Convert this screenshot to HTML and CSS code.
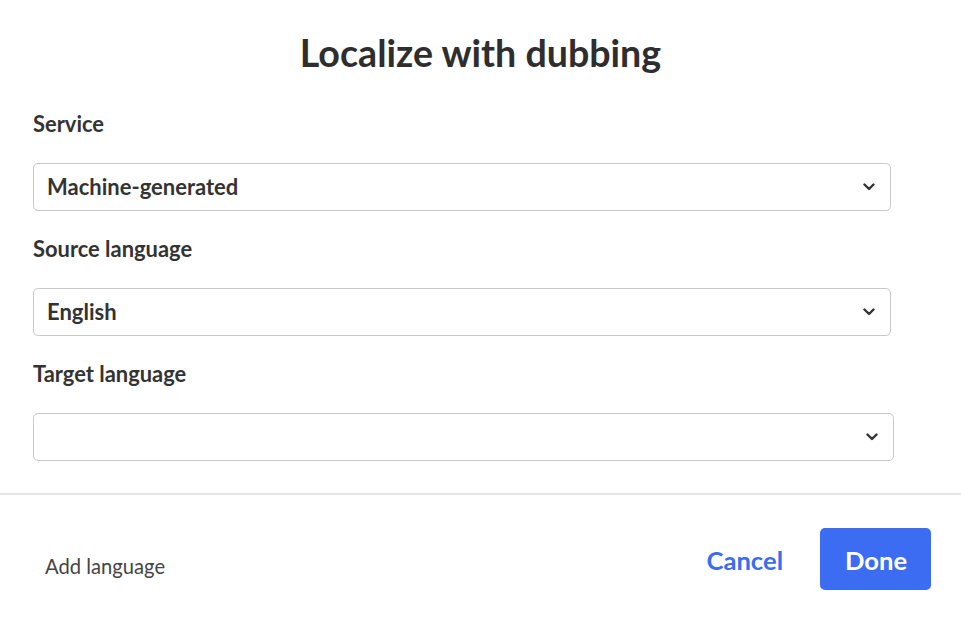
FILE: index.html
```html
<!DOCTYPE html>
<html lang="en">
<head>
<meta charset="utf-8">
<title>Localize with dubbing</title>
<link rel="stylesheet" href="styles.css">
</head>
<body>
<div class="dialog">
  <h1 class="title">Localize with dubbing</h1>
  <div class="form">
    <div class="field">
      <div class="label">Service</div>
      <div class="select">
        <span class="value">Machine-generated</span>
        <svg class="chev" width="12" height="8" viewBox="0 0 12 8"><path d="M1.5 1.5 L6 6 L10.5 1.5" fill="none" stroke="#333" stroke-width="2.4" stroke-linecap="round" stroke-linejoin="round"/></svg>
      </div>
    </div>
    <div class="field">
      <div class="label">Source language</div>
      <div class="select">
        <span class="value">English</span>
        <svg class="chev" width="12" height="8" viewBox="0 0 12 8"><path d="M1.5 1.5 L6 6 L10.5 1.5" fill="none" stroke="#333" stroke-width="2.4" stroke-linecap="round" stroke-linejoin="round"/></svg>
      </div>
    </div>
    <div class="field">
      <div class="label">Target language</div>
      <div class="select select-wide">
        <span class="value"></span>
        <svg class="chev" width="12" height="8" viewBox="0 0 12 8"><path d="M1.5 1.5 L6 6 L10.5 1.5" fill="none" stroke="#333" stroke-width="2.4" stroke-linecap="round" stroke-linejoin="round"/></svg>
      </div>
    </div>
  </div>
  <div class="footer">
    <span class="add">Add language</span>
    <div class="actions">
      <span class="cancel">Cancel</span>
      <span class="done">Done</span>
    </div>
  </div>
</div>
</body>
</html>
```
FILE: styles.css
```css
html, body {
  margin: 0;
  padding: 0;
  background: #ffffff;
}
body {
  font-family: Lato, "Open Sans", "Liberation Sans", sans-serif;
  color: #333333;
}
.dialog {
  display: flex;
  flex-direction: column;
}
.title {
  margin: 31px 0 0 0;
  font-size: 37.6px;
  line-height: 44px;
  font-weight: 700;
  text-align: center;
  color: #2e2e2e;
}
.form {
  display: flex;
  flex-direction: column;
  gap: 26px;
  padding: 37px 70px 32px 33px;
  border-bottom: 2px solid #e4e4e4;
}
.field {
  display: flex;
  flex-direction: column;
  gap: 27px;
}
.label {
  font-size: 21.9px;
  line-height: 24px;
  font-weight: 700;
  color: #333333;
}
.select {
  height: 48px;
  box-sizing: border-box;
  border: 1.5px solid #c9c9c9;
  border-radius: 5px;
  display: flex;
  align-items: center;
  justify-content: space-between;
  padding: 0 15px 0 13px;
}
.select-wide {
  margin-right: -3px;
}
.value {
  font-size: 22px;
  line-height: 24px;
  font-weight: 700;
  color: #333333;
}
.chev {
  display: block;
}
.footer {
  display: flex;
  align-items: center;
  justify-content: space-between;
  padding: 33px 30px 0 45px;
}
.add {
  font-size: 20.2px;
  line-height: 24px;
  color: #444444;
  margin-top: 14px;
}
.actions {
  display: flex;
  align-items: center;
  gap: 37px;
}
.cancel {
  font-size: 25.6px;
  line-height: 28px;
  font-weight: 700;
  color: #3b6cf2;
  margin-top: 2px;
}
.done {
  font-size: 25.6px;
  line-height: 28px;
  font-weight: 700;
  color: #ffffff;
  background: #3b6cf2;
  border-radius: 5px;
  padding: 18px 25px 16px;
  width: 61px;
  text-align: center;
}
```
